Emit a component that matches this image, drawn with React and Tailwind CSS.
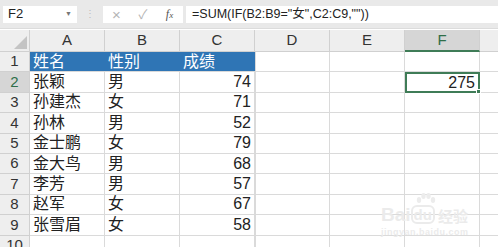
import React from "react";

const cols = ["A", "B", "C", "D", "E", "F"];

const rows = [
  ["姓名", "性别", "成绩"],
  ["张颖", "男", 74],
  ["孙建杰", "女", 71],
  ["孙林", "男", 52],
  ["金士鹏", "女", 79],
  ["金大鸟", "男", 68],
  ["李芳", "男", 57],
  ["赵军", "女", 67],
  ["张雪眉", "女", 58],
  ["", "", ""],
];

const font = { fontFamily: '"Liberation Sans", "Noto Sans CJK SC", sans-serif' };

export default function App() {
  return (
    <div className="relative w-[498px] h-[247px] overflow-hidden bg-white text-[#222]" style={font}>
      {/* formula bar */}
      <div className="h-[29px] bg-[#e9e9e9] flex items-center pl-[3px] gap-[3px] border-b border-[#dcdcdc]">
        <div className="w-[74px] h-[17px] bg-white flex items-center justify-between px-[5px] text-[13px]">
          <span>F2</span>
          <span className="text-[7px] text-[#777]">▼</span>
        </div>
        <div className="w-[20px] flex justify-center text-[#bdbdbd] text-[10px] leading-none">⋮</div>
        <div className="w-[80px] h-[17px] bg-white flex items-center text-[#b5b5b5]">
          <span className="w-[27px] text-center text-[15px] leading-none">×</span>
          <span className="w-[26px] text-center text-[13px] leading-none">✓</span>
          <span className="w-[27px] text-center text-[12px] italic text-[#555]" style={{ fontFamily: '"Liberation Serif", serif' }}>
            f<span className="text-[9px]">x</span>
          </span>
        </div>
        <div className="flex-1 h-[17px] bg-white flex items-center pl-[6px] text-[12.5px] text-[#222]">
          =SUM(IF(B2:B9="女",C2:C9,""))
        </div>
      </div>

      {/* grid */}
      <div className="grid grid-cols-[30px_75px_75px_75px_75px_75px_75px_18px] grid-rows-[22px_repeat(10,20.4px)] mt-[1px]">
        {/* corner */}
        <div className="bg-[#eeeeee] border-r border-b border-[#d0d0d0] flex items-end justify-end p-[2px]">
          <div className="w-0 h-0 border-l-[13px] border-l-transparent border-b-[13px] border-b-[#c4c4c4]" />
        </div>
        {cols.map((c) => (
          <div
            key={c}
            className={
              c === "F"
                ? "bg-[#d6d6d6] border-r border-b-2 border-r-[#d0d0d0] border-b-[#3f7c57] text-[#2f6e48] flex items-center justify-center text-[15px]"
                : "bg-[#eeeeee] border-r border-b border-[#d0d0d0] flex items-center justify-center text-[15px] text-[#333]"
            }
          >
            {c}
          </div>
        ))}
        <div className="bg-[#eeeeee] border-b border-[#d0d0d0]" />

        {rows.map((r, i) => (
          <React.Fragment key={i}>
            <div
              className={
                i === 1
                  ? "bg-[#d6d6d6] border-r border-b border-[#d0d0d0] flex items-center justify-center text-[15px] text-[#2f6e48]"
                  : "bg-[#eeeeee] border-r border-b border-[#d0d0d0] flex items-center justify-center text-[15px] text-[#333]"
              }
            >
              {i + 1}
            </div>
            {[0, 1, 2].map((j) => {
              const v = r[j];
              const head = i === 0;
              const num = typeof v === "number";
              return (
                <div
                  key={j}
                  className={
                    head
                      ? "bg-[#2f75b5] text-white border-b border-[#d9d9d9] flex items-center px-[3px] text-[16px]"
                      : num
                      ? "border-r border-b border-[#dadada] flex items-center justify-end px-[3px] text-[16px]"
                      : "border-r border-b border-[#dadada] flex items-center px-[3px] text-[16px]"
                  }
                >
                  {v}
                </div>
              );
            })}
            <div className="border-r border-b border-[#dadada] border-l border-l-[#dadada]" />
            <div className="border-r border-b border-[#dadada]" />
            {i === 1 ? (
              <div className="relative border-2 border-[#3f7c57] flex items-center justify-end px-[3px] text-[16px]">
                275
                <div className="absolute -right-[3px] -bottom-[3px] w-[5px] h-[5px] bg-[#3f7c57] border border-white" />
              </div>
            ) : (
              <div className="border-r border-b border-[#dadada]" />
            )}
            <div className="border-b border-[#dadada]" />
          </React.Fragment>
        ))}
      </div>

      {/* watermark */}
      <div className="absolute left-[381px] top-[193px] flex flex-col items-start text-[#ebebeb] pointer-events-none">
        <svg width="22" height="14" viewBox="0 0 22 14" className="ml-[34px] mb-[-2px]" fill="#ececec">
          <ellipse cx="4" cy="7" rx="2.2" ry="3" />
          <ellipse cx="8.5" cy="3" rx="2.2" ry="3" />
          <ellipse cx="13.5" cy="3" rx="2.2" ry="3" />
          <ellipse cx="18" cy="7" rx="2.2" ry="3" />
        </svg>
        <div className="flex items-end">
          <span className="text-[19px] font-bold leading-none">Bai</span>
          <span className="text-[15px] font-bold leading-none border-2 border-[#ebebeb] rounded-[6px] px-[1px]">du</span>
          <span className="text-[15px] font-bold leading-none ml-[3px]">经验</span>
        </div>
        <div className="text-[9px] font-bold mt-[2px] tracking-[0.5px]">jingyan.baidu.com</div>
      </div>
    </div>
  );
}
